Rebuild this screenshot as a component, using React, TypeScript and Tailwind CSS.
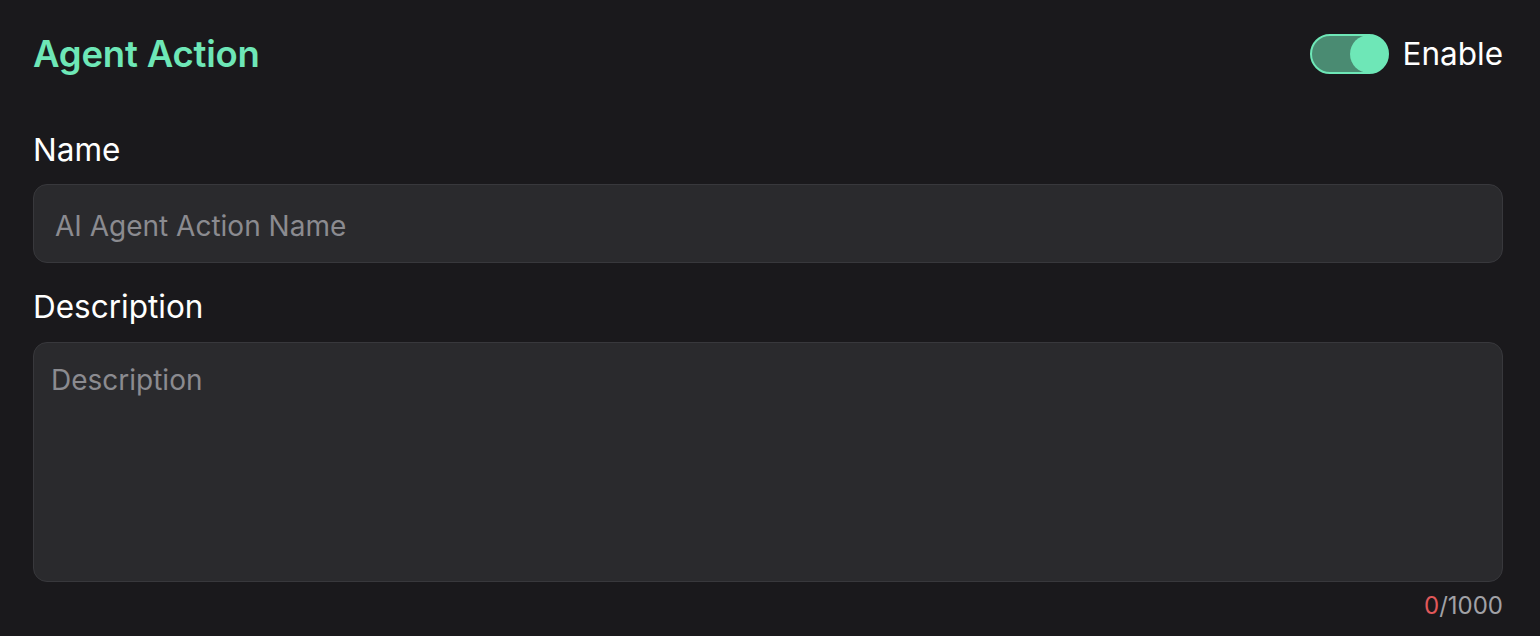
export default function App() {
  return (
    <div className="min-h-screen w-full bg-[#1a191c] pl-[33px] pr-[37px] pt-[30px] font-['Inter',sans-serif] text-white">
      <div className="flex h-[48px] items-center justify-between">
        <h1 className="text-[36.5px] font-semibold tracking-[-0.2px] text-[#6ee7b7]">Agent Action</h1>
        <div className="flex items-center gap-[13px]">
          <span className="relative flex h-[40px] w-[79px] items-center rounded-full border-2 border-[#6ee7b7] bg-[#4a8b72]">
            <span className="absolute right-0 h-[38px] w-[38px] translate-x-[1px] rounded-full bg-[#6ee7b7]" />
          </span>
          <span className="text-[31.5px] leading-none">Enable</span>
        </div>
      </div>

      <label className="mt-[56px] block text-[31.5px] leading-none">Name</label>
      <div className="mt-[18px] flex h-[79px] items-center rounded-[14px] border border-[#38383c] bg-[#2a2a2d] px-[21px] pt-[5px]">
        <span className="text-[28px] text-[#8b8b90]">AI Agent Action Name</span>
      </div>

      <label className="mt-[28px] block text-[31.5px] leading-none">Description</label>
      <div className="mt-[20px] h-[240px] rounded-[14px] border border-[#38383c] bg-[#2a2a2d] px-[17px] pt-[16px]">
        <span className="text-[28px] text-[#8b8b90]">Description</span>
      </div>
      <div className="mt-[12px] text-right text-[24px] leading-none text-[#a1a1a6]">
        <span className="text-[#e0585a]">0</span>/1000
      </div>
    </div>
  );
}
